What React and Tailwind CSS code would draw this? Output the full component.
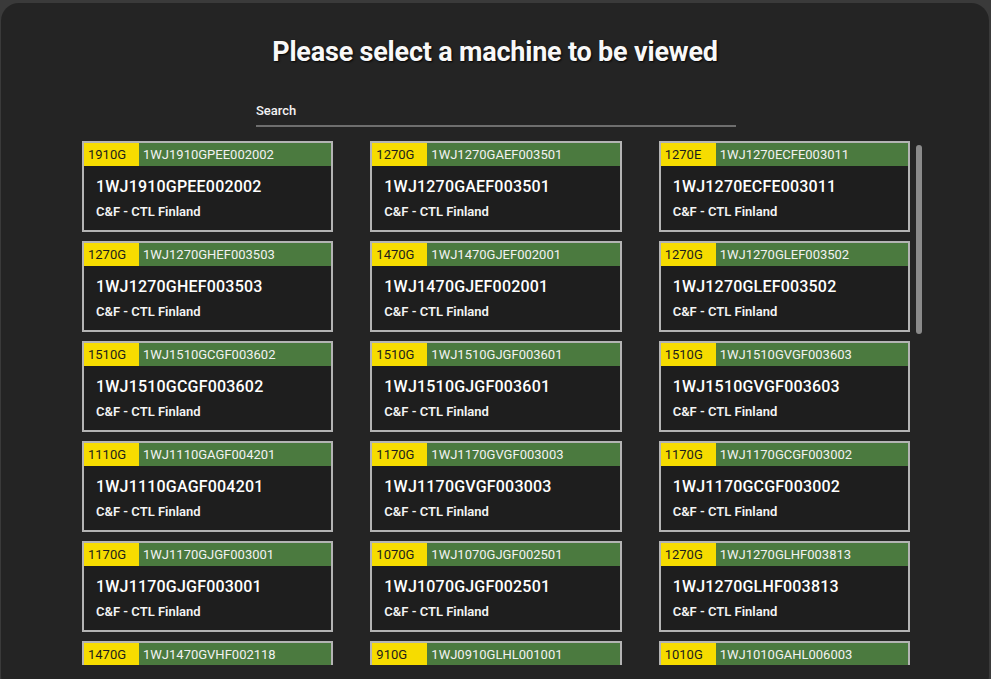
const machines = [
  ["1910G", "1WJ1910GPEE002002"],
  ["1270G", "1WJ1270GAEF003501"],
  ["1270E", "1WJ1270ECFE003011"],
  ["1270G", "1WJ1270GHEF003503"],
  ["1470G", "1WJ1470GJEF002001"],
  ["1270G", "1WJ1270GLEF003502"],
  ["1510G", "1WJ1510GCGF003602"],
  ["1510G", "1WJ1510GJGF003601"],
  ["1510G", "1WJ1510GVGF003603"],
  ["1110G", "1WJ1110GAGF004201"],
  ["1170G", "1WJ1170GVGF003003"],
  ["1170G", "1WJ1170GCGF003002"],
  ["1170G", "1WJ1170GJGF003001"],
  ["1070G", "1WJ1070GJGF002501"],
  ["1270G", "1WJ1270GLHF003813"],
  ["1470G", "1WJ1470GVHF002118"],
  ["910G", "1WJ0910GLHL001001"],
  ["1010G", "1WJ1010GAHL006003"],
];

function MachineCard({ model, serial }) {
  return (
    <div className="h-[91px] shrink-0 border-2 border-[#b4b4b4] bg-[#1e1e1e]">
      <div className="flex h-[23px] items-center bg-[#4b7a3f] text-[13px] leading-none">
        <div className="flex h-full w-[55px] items-center bg-[#f6dc00] pl-[4px] text-[#1c1c1c]">
          {model}
        </div>
        <div className="pl-[4px] text-[#f2f2f2]">{serial}</div>
      </div>
      <div className="px-[12px] pt-[11px]">
        <p className="text-[16px] font-medium leading-[20px] tracking-[0.2px] text-white">
          {serial}
        </p>
        <p className="mt-[7px] text-[13px] font-semibold leading-[16px] text-[#f4f4f4]">
          C&amp;F - CTL Finland
        </p>
      </div>
    </div>
  );
}

function App() {
  return (
    <main
      className="h-[679px] w-[991px] overflow-hidden bg-[#3a3a3a] pl-[1px] pr-[2px] pt-[3px]"
      style={{ fontFamily: "Roboto, 'Liberation Sans', sans-serif" }}
    >
      <div className="flex h-[690px] flex-col rounded-[18px] bg-[#242424]">
        <h1 className="pt-[33px] text-center text-[27px] font-bold leading-[32px] tracking-[-0.2px] text-[#f8f8f8] [text-shadow:1px_1px_2px_rgba(0,0,0,0.9)]">
          Please select a machine to be viewed
        </h1>
        <div className="ml-[255px] mt-[30px] w-[480px] border-b-2 border-[#6e6e6e] pb-[3px]">
          <span className="text-[13px] font-medium leading-[16px] text-[#f2f2f2]">
            Search
          </span>
        </div>
        <div className="ml-[81px] mt-[14px] flex h-[524px] overflow-hidden">
          <div className="grid w-[828px] grid-cols-3 gap-x-[37px] gap-y-[9px] content-start">
            {machines.map(([model, serial]) => (
              <MachineCard key={serial} model={model} serial={serial} />
            ))}
          </div>
          <div className="ml-[6px] mt-[4px] h-[189px] w-[6px] rounded-full bg-[#8a8a8a]" />
        </div>
      </div>
    </main>
  );
}

export default App;
